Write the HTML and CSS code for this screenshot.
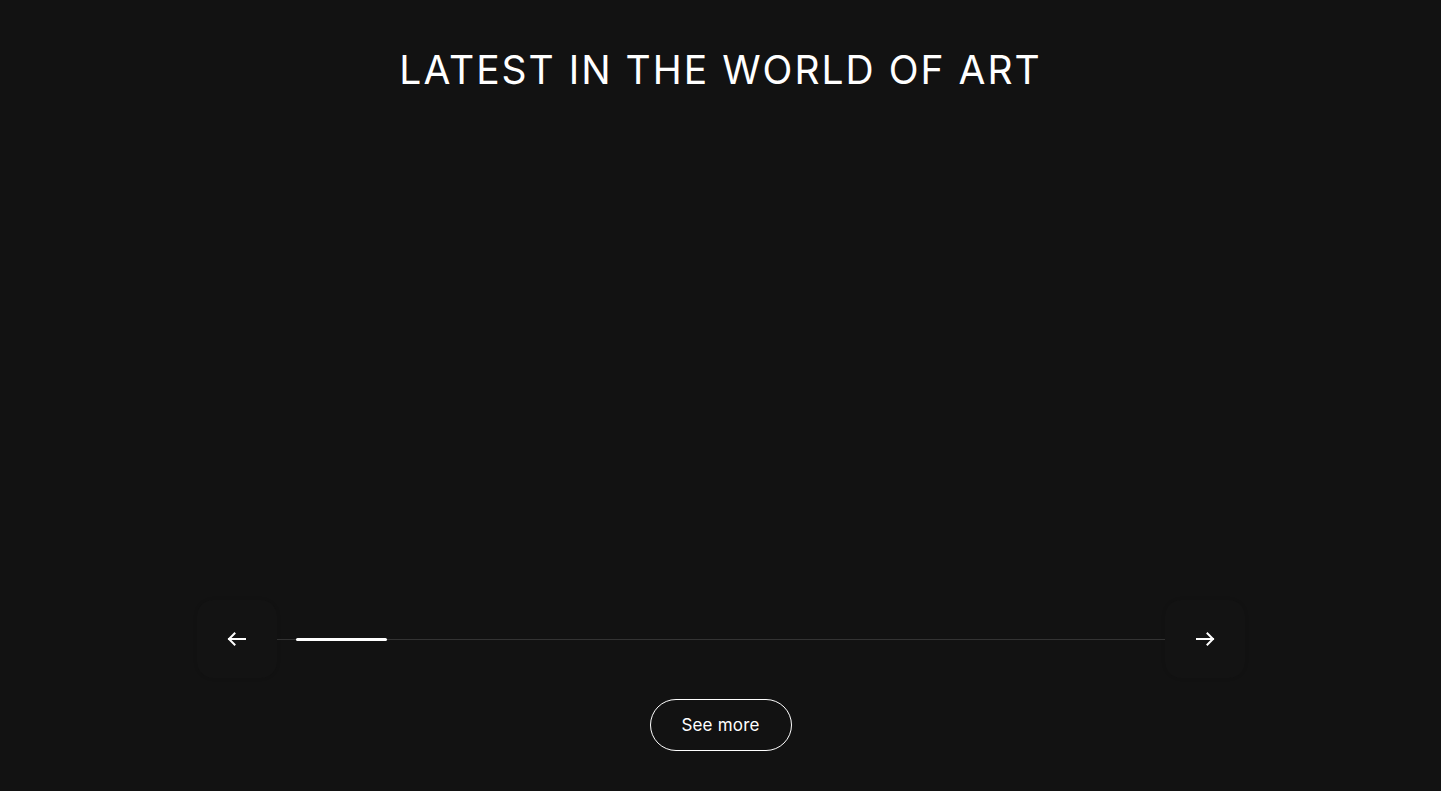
FILE: index.html
```html
<!DOCTYPE html>
<html lang="en">
<head>
<meta charset="utf-8">
<title>Latest in the world of art</title>
<link rel="stylesheet" href="styles.css">
</head>
<body>
<section class="news">
  <h2 class="news-title">LATEST IN THE WORLD OF ART</h2>
  <div class="news-slides"></div>
  <div class="news-nav">
    <button class="nav-btn" aria-label="Previous">
      <svg width="20" height="14" viewBox="0 0 20 14" fill="none" stroke="#fff" stroke-width="2" stroke-linecap="square"><path d="M2 7h16"/><path d="M7.5 1.5L2 7l5.5 5.5"/></svg>
    </button>
    <div class="track"><div class="thumb"></div></div>
    <button class="nav-btn" aria-label="Next">
      <svg width="20" height="14" viewBox="0 0 20 14" fill="none" stroke="#fff" stroke-width="2" stroke-linecap="square"><path d="M2 7h16"/><path d="M12.5 1.5L18 7l-5.5 5.5"/></svg>
    </button>
  </div>
  <div class="more-wrap"><a class="more-btn" href="#">See more</a></div>
</section>
</body>
</html>
```

FILE: styles.css
```css
html, body {
  margin: 0;
  padding: 0;
  background: #121212;
  height: 100%;
}
body {
  font-family: "Inter", "Lato", sans-serif;
  color: #fff;
  overflow: hidden;
}
.news {
  display: flex;
  flex-direction: column;
  align-items: center;
  padding-top: 40px;
}
.news-title {
  margin: 0;
  font-weight: 400;
  font-size: 39px;
  line-height: 60px;
  letter-spacing: 2px;
  text-align: center;
}
.news-slides {
  height: 500px;
  width: 100%;
}
.news-nav {
  width: 1048px;
  display: flex;
  align-items: center;
}
.nav-btn {
  width: 80px;
  height: 78px;
  border: none;
  border-radius: 16px;
  background: #131313;
  box-shadow: 0 0 4px rgba(0,0,0,0.08);
  display: flex;
  align-items: center;
  justify-content: center;
  padding: 0;
  cursor: pointer;
}
.track {
  flex: 1;
  height: 1px;
  background: #333;
  position: relative;
}
.thumb {
  position: absolute;
  left: 19px;
  top: -1px;
  width: 91px;
  height: 3px;
  border-radius: 2px;
  background: #fff;
}
.more-wrap {
  margin-top: 21px;
}
.more-btn {
  display: flex;
  align-items: center;
  justify-content: center;
  box-sizing: border-box;
  width: 142px;
  height: 52px;
  border: 1px solid #fff;
  border-radius: 26px;
  color: #fff;
  text-decoration: none;
  font-size: 17px;
  letter-spacing: 0.2px;
}
```
